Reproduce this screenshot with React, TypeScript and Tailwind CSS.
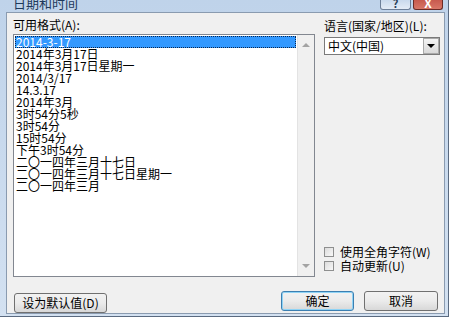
import React from 'react';

const font = { fontFamily: '"Noto Sans CJK SC", "Liberation Sans", sans-serif' };

const formats = [
  '2014-3-17',
  '2014年3月17日',
  '2014年3月17日星期一',
  '2014/3/17',
  '14.3.17',
  '2014年3月',
  '3时54分5秒',
  '3时54分',
  '15时54分',
  '下午3时54分',
  '二〇一四年三月十七日',
  '二〇一四年三月十七日星期一',
  '二〇一四年三月',
];

const CheckBox: React.FC<{ label: string }> = ({ label }) => (
  <div className="flex items-center h-[14px]">
    <div className="w-[10px] h-[10px] border border-[#8e8f8f] bg-gradient-to-br from-[#dcdcdc] to-[#f8f8f8]" />
    <span className="ml-[6px] text-[12px] leading-[14px] text-black">{label}</span>
  </div>
);

const Button: React.FC<{ label: string; w: string; focused?: boolean }> = ({ label, w, focused }) => (
  <button
    className={`${w} h-[20px] rounded-[3px] border text-[12px] leading-[18px] text-black bg-gradient-to-b from-[#f2f2f2] via-[#ebebeb] to-[#d8d8d8] ${
      focused ? 'border-[#3c7fb1] shadow-[inset_0_0_0_1px_#8fd3f5]' : 'border-[#707070]'
    }`}
  >
    {label}
  </button>
);

export default function App() {
  return (
    <div className="w-[471px] h-[332px] bg-white overflow-hidden" style={font}>
      <div className="w-[449px] h-[317px] flex flex-col bg-gradient-to-b from-[#bfd3ea] to-[#d3e1f1] border-r border-b border-[#5a6a80] pl-[6px] pr-[3px] pb-[3px]">
        {/* title bar */}
        <div className="h-[12px] flex items-end overflow-hidden shrink-0">
          <span className="ml-[7px] mb-[3px] text-[13px] leading-[13px] text-[#1e395b]">日期和时间</span>
          <div className="ml-auto flex items-start self-start mr-[2px]">
            <div className="w-[31px] h-[10px] rounded-b-[3px] border border-t-0 border-[#6d7f98] bg-gradient-to-b from-[#c9d9ec] to-[#e4ecf6] flex justify-center">
              <span className="text-[11px] leading-[6px] text-[#2a3d57] font-bold">?</span>
            </div>
            <div className="ml-[2px] w-[30px] h-[10px] rounded-b-[3px] border border-t-0 border-[#6b2b26] bg-gradient-to-b from-[#c75a4e] to-[#d87667] flex justify-center">
              <span className="text-[12px] leading-[6px] text-white font-bold">X</span>
            </div>
          </div>
        </div>

        {/* client */}
        <div className="flex-1 bg-[#f0f0f0] border border-[#8a9bb0] pl-[6px] pt-[2px] flex flex-col">
          <div className="flex">
            <div className="w-[302px] flex flex-col">
              <div className="h-[19px] text-[12px] leading-[19px] text-black">可用格式(A):</div>
              <div className="h-[243px] bg-white border border-[#828790] flex">
                <div className="flex-1 pt-[1px] pl-[1px] pr-[1px]">
                  {formats.map((f, i) => (
                    <div
                      key={i}
                      className={`h-[12px] text-[12px] leading-[12px] whitespace-nowrap pl-[1px] ${
                        i === 0 ? 'bg-[#3399ff] text-white outline-1 outline-dotted outline-[#0b2850] -outline-offset-1' : 'text-black'
                      }`}
                    >
                      {f}
                    </div>
                  ))}
                </div>
                <div className="w-[17px] bg-[#f0f0f0] border-l border-[#e3e3e3] flex flex-col items-center justify-between py-[8px]">
                  <div className="w-0 h-0 border-l-[4px] border-r-[4px] border-b-[4px] border-l-transparent border-r-transparent border-b-[#a3a3a3]" />
                  <div className="w-0 h-0 border-l-[4px] border-r-[4px] border-t-[4px] border-l-transparent border-r-transparent border-t-[#a3a3a3]" />
                </div>
              </div>
            </div>

            <div className="ml-[9px] w-[116px] flex flex-col">
              <div className="h-[22px] text-[12px] leading-[22px] text-black whitespace-nowrap">语言(国家/地区)(L):</div>
              <div className="h-[18px] bg-white border border-[#7a7a7a] flex items-center">
                <span className="flex-1 pl-[3px] text-[12px] leading-[16px] text-black">中文(中国)</span>
                <div className="w-[16px] h-[16px] border border-[#a9a9a9] bg-gradient-to-b from-[#f4f4f4] to-[#d9d9d9] flex items-center justify-center">
                  <div className="w-0 h-0 border-l-[4px] border-r-[4px] border-t-[4px] border-l-transparent border-r-transparent border-t-black" />
                </div>
              </div>
              <div className="flex-1" />
              <div className="flex flex-col mb-[4px]">
                <CheckBox label="使用全角字符(W)" />
                <CheckBox label="自动更新(U)" />
              </div>
            </div>
          </div>

          <div className="mt-[12px] flex items-center">
            <div className="ml-[1px]">
              <Button label="设为默认值(D)" w="w-[93px]" />
            </div>
            <div className="ml-auto mr-[6px] flex gap-[10px]">
              <Button label="确定" w="w-[73px]" focused />
              <Button label="取消" w="w-[74px]" />
            </div>
          </div>
        </div>
      </div>
    </div>
  );
}
